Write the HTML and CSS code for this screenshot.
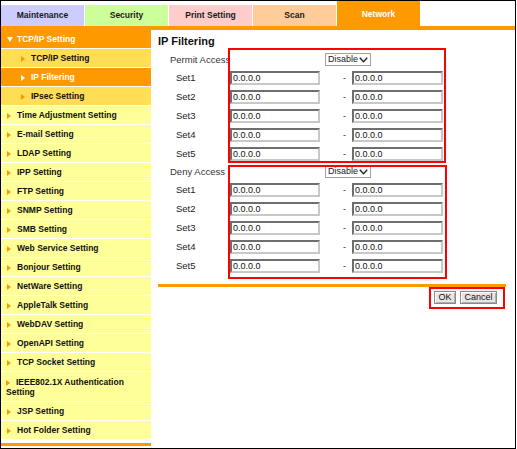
FILE: index.html
```html
<!DOCTYPE html>
<html>
<head>
    <meta charset="utf-8">
    <title>IP Filtering</title>
    <link rel="stylesheet" href="styles.css">
</head>
<body>
    <div class="frame">
        <!-- top tabs -->
        <div class="tabs">
            <div class="tab tab-maint">Maintenance</div>
            <div class="tab tab-security">Security</div>
            <div class="tab tab-print">Print Setting</div>
            <div class="tab tab-scan">Scan</div>
            <div class="tab tab-network">Network</div>
        </div>

        <div class="layout">
            <ul class="menu">
                <li class="menu-head">TCP/IP Setting</li>
                <li class="menu-sub">TCP/IP Setting</li>
                <li class="menu-sub is-active">IP Filtering</li>
                <li class="menu-sub">IPsec Setting</li>
                <li class="menu-item">Time Adjustment Setting</li>
                <li class="menu-item">E-mail Setting</li>
                <li class="menu-item">LDAP Setting</li>
                <li class="menu-item">IPP Setting</li>
                <li class="menu-item">FTP Setting</li>
                <li class="menu-item">SNMP Setting</li>
                <li class="menu-item">SMB Setting</li>
                <li class="menu-item">Web Service Setting</li>
                <li class="menu-item">Bonjour Setting</li>
                <li class="menu-item">NetWare Setting</li>
                <li class="menu-item">AppleTalk Setting</li>
                <li class="menu-item">WebDAV Setting</li>
                <li class="menu-item">OpenAPI Setting</li>
                <li class="menu-item">TCP Socket Setting</li>
                <li class="menu-item menu-tall">IEEE802.1X Authentication Setting</li>
                <li class="menu-item">JSP Setting</li>
                <li class="menu-item">Hot Folder Setting</li>
            </ul>

            <div class="content">
                <h2>IP Filtering</h2>

                <div class="group">
                    <div class="group-head">
                        <span class="group-label">Permit Access</span>
                        <span class="select-wrap">
                            <select><option>Disable</option><option>Enable</option></select>
                            <svg class="chevron" width="9" height="6" viewBox="0 0 9 6"><polyline points="0.8,0.8 4.5,4.8 8.2,0.8" fill="none" stroke="#222" stroke-width="1.4"/></svg>
                        </span>
                    </div>
                    <div class="set-row"><span class="set-label">Set1</span><input class="ip-from" value="0.0.0.0"><span class="dash">-</span><input class="ip-to" value="0.0.0.0"></div>
                    <div class="set-row"><span class="set-label">Set2</span><input class="ip-from" value="0.0.0.0"><span class="dash">-</span><input class="ip-to" value="0.0.0.0"></div>
                    <div class="set-row"><span class="set-label">Set3</span><input class="ip-from" value="0.0.0.0"><span class="dash">-</span><input class="ip-to" value="0.0.0.0"></div>
                    <div class="set-row"><span class="set-label">Set4</span><input class="ip-from" value="0.0.0.0"><span class="dash">-</span><input class="ip-to" value="0.0.0.0"></div>
                    <div class="set-row"><span class="set-label">Set5</span><input class="ip-from" value="0.0.0.0"><span class="dash">-</span><input class="ip-to" value="0.0.0.0"></div>
                </div>

                <div class="group">
                    <div class="group-head">
                        <span class="group-label">Deny Access</span>
                        <span class="select-wrap">
                            <select><option>Disable</option><option>Enable</option></select>
                            <svg class="chevron" width="9" height="6" viewBox="0 0 9 6"><polyline points="0.8,0.8 4.5,4.8 8.2,0.8" fill="none" stroke="#222" stroke-width="1.4"/></svg>
                        </span>
                    </div>
                    <div class="set-row"><span class="set-label">Set1</span><input class="ip-from" value="0.0.0.0"><span class="dash">-</span><input class="ip-to" value="0.0.0.0"></div>
                    <div class="set-row"><span class="set-label">Set2</span><input class="ip-from" value="0.0.0.0"><span class="dash">-</span><input class="ip-to" value="0.0.0.0"></div>
                    <div class="set-row"><span class="set-label">Set3</span><input class="ip-from" value="0.0.0.0"><span class="dash">-</span><input class="ip-to" value="0.0.0.0"></div>
                    <div class="set-row"><span class="set-label">Set4</span><input class="ip-from" value="0.0.0.0"><span class="dash">-</span><input class="ip-to" value="0.0.0.0"></div>
                    <div class="set-row"><span class="set-label">Set5</span><input class="ip-from" value="0.0.0.0"><span class="dash">-</span><input class="ip-to" value="0.0.0.0"></div>
                </div>

                <div class="rule"></div>

                <div class="actions">
                    <button class="btn-ok">OK</button>
                    <button class="btn-cancel">Cancel</button>
                </div>

                <!-- red annotation boxes drawn over the form -->
                <div class="mark mark-permit"></div>
                <div class="mark mark-deny"></div>
                <div class="mark mark-buttons"></div>
            </div>
        </div>
    </div>
</body>
</html>
```

FILE: styles.css
```css
/* page frame */
body {
    margin: 0;
    background: #fff;
    font-family: "Liberation Sans", Arial, sans-serif;
}

.frame {
    width: 514px;
    height: 447px;
    border: 1px solid #000;
    overflow: hidden;
}

/* tabs along the top */
.tabs {
    display: flex;
    align-items: flex-end;
    gap: 1px;
    height: 25px;
    border-bottom: 4px solid #ff9900;
}

.tab {
    width: 83px;
    height: 21px;
    line-height: 21px;
    text-align: center;
    font-size: 8.5px;
    font-weight: bold;
    color: #1a1a1a;
}

.tab-maint { background: #ccccff; }
.tab-security { background: #ccff99; }
.tab-print { background: #ffcccc; }
.tab-scan { background: #ffcc99; }

.tab-network {
    height: 25px;
    line-height: 26px;
    background: #ff9900;
    color: #fff;
}

.layout {
    display: flex;
    align-items: flex-start;
}

/* left menu */
.menu {
    width: 150px;
    margin: 0;
    padding: 0 0 3px;
    list-style: none;
    border-bottom: 3px solid #ff9900;
}

.menu li {
    height: 18px;
    line-height: 18px;
    padding-left: 6px;
    border-bottom: 1px solid #fff;
    font-size: 8.5px;
    font-weight: bold;
    color: #111;
    background: #ffff99;
    white-space: nowrap;
}

.menu li::before {
    content: "";
    display: inline-block;
    width: 0;
    height: 0;
    margin-right: 6px;
    border-left: 4px solid #ff9900;
    border-top: 3px solid transparent;
    border-bottom: 3px solid transparent;
    vertical-align: -1px;
}

.menu .menu-head {
    background: #ff9900;
    color: #fff;
}

.menu .menu-head::before {
    margin-right: 4px;
    border-left: 3px solid transparent;
    border-right: 3px solid transparent;
    border-top: 5px solid #fff;
    border-bottom: 0;
    vertical-align: 0;
}

.menu .menu-sub {
    padding-left: 20px;
    background: #ffdd55;
}

.menu .is-active {
    background: #ff9900;
    color: #fff;
}

.menu .is-active::before {
    border-left-color: #fff;
}

.menu .menu-tall {
    height: 20px;
    line-height: 10px;
    padding-top: 5px;
    padding-bottom: 4px;
    padding-left: 5px;
    white-space: normal;
}

/* main form */
.content {
    position: relative;
    width: 348px;
    margin-left: 7px;
}

.content h2 {
    margin: 5px 0 3px;
    font-size: 11px;
    line-height: 13px;
    color: #111;
}

.group-head {
    display: flex;
    align-items: center;
    height: 17px;
}

.group-label {
    width: 155px;
    padding-left: 12px;
    font-size: 9.5px;
    color: #333;
}

.select-wrap {
    position: relative;
    display: inline-block;
}

.select-wrap select {
    appearance: none;
    -webkit-appearance: none;
    display: block;
    width: 46px;
    height: 13px;
    margin: 0;
    padding: 0 0 0 2px;
    border: 1px solid #a0a0a0;
    border-radius: 0;
    background: #fff;
    font-family: "Liberation Sans", Arial, sans-serif;
    font-size: 9px;
    line-height: 11px;
    color: #222;
}

.chevron {
    position: absolute;
    right: 3px;
    top: 4px;
}

.set-row {
    display: flex;
    align-items: center;
    height: 19px;
}

.set-label {
    width: 54px;
    padding-left: 18px;
    font-size: 9.5px;
    color: #222;
}

.set-row input {
    box-sizing: border-box;
    height: 14px;
    margin: 0;
    padding: 0 1px;
    border: 2px solid;
    border-color: #6e6e6e #c8c8c8 #c8c8c8 #6e6e6e;
    font-family: "Liberation Sans", Arial, sans-serif;
    font-size: 9px;
    color: #111;
}

.ip-from { width: 90px; }
.ip-to { width: 91px; }

.dash {
    box-sizing: border-box;
    width: 32px;
    padding-right: 6px;
    text-align: right;
    font-size: 9px;
    color: #333;
}

.rule {
    height: 3px;
    margin-top: 9px;
    background: #ff9900;
}

.actions {
    display: flex;
    justify-content: flex-end;
    gap: 4px;
    padding: 4px 9px 0 0;
}

.actions button {
    height: 13px;
    margin: 0;
    padding: 0;
    border: 1px solid #8a8a8a;
    border-radius: 0;
    background: #e6e6e6;
    box-shadow: inset 1px 1px #fff, inset -1px -1px #b0b0b0;
    font-family: "Liberation Sans", Arial, sans-serif;
    font-size: 9px;
    line-height: 11px;
    color: #111;
}

.btn-ok { width: 22px; }
.btn-cancel { width: 37px; }

/* annotation outlines */
.mark {
    position: absolute;
    box-sizing: border-box;
    border: 2px solid #ff0000;
    pointer-events: none;
}

.mark-permit { left: 70px; top: 18px; width: 218px; height: 115px; }
.mark-deny { left: 70px; top: 135px; width: 219px; height: 114px; }
.mark-buttons { left: 271px; top: 257px; width: 76px; height: 22px; }
```
